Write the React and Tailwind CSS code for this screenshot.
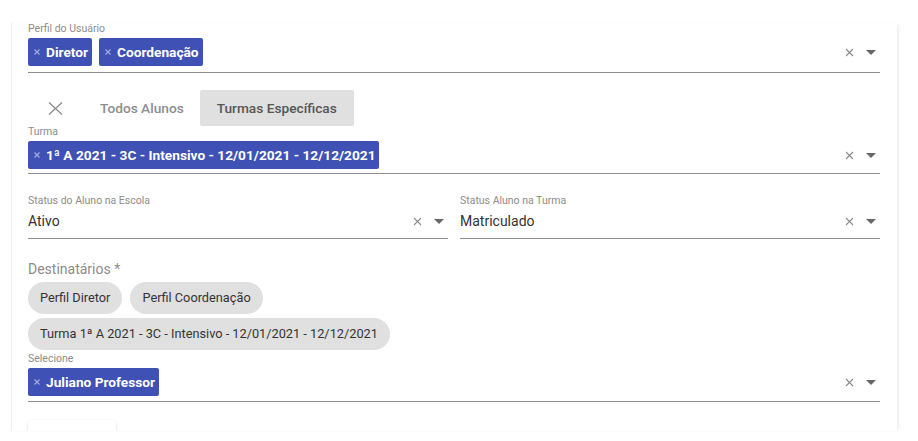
import React from 'react';

const font = { fontFamily: 'Roboto, "Noto Sans", sans-serif' };

function ClearIcon() {
  return (
    <svg width="9" height="9" viewBox="0 0 9 9" className="block">
      <path d="M1 1L8 8M8 1L1 8" stroke="#8a8a8a" strokeWidth="1.1" fill="none" />
    </svg>
  );
}

function ArrowIcon() {
  return (
    <svg width="10" height="5" viewBox="0 0 10 5" className="block">
      <path d="M0 0h10L5 5z" fill="#666" />
    </svg>
  );
}

function Adornment() {
  return (
    <div className="flex items-center gap-[12px] pr-[4px]">
      <ClearIcon />
      <ArrowIcon />
    </div>
  );
}

function Tag({ children }) {
  return (
    <span className="inline-flex h-[28px] items-center gap-[6px] rounded-[2px] bg-[#3f51b5] pl-[6px] pr-[4px] text-[13.7px] font-bold text-white">
      <svg width="6" height="6" viewBox="0 0 6 6" className="block">
        <path d="M0.5 0.5L5.5 5.5M5.5 0.5L0.5 5.5" stroke="#a4abdb" strokeWidth="1.2" />
      </svg>
      {children}
    </span>
  );
}

function Label({ children }) {
  return <div className="text-[10.5px] leading-[12px] text-[#8c8c8c]">{children}</div>;
}

function TagField({ label, tags, pb = 'pb-[6px]' }) {
  return (
    <div>
      <Label>{label}</Label>
      <div className={`mt-[3px] flex items-center border-b border-[#8f8f8f] ${pb}`}>
        <div className="flex flex-1 flex-wrap gap-[7px]">
          {tags.map((t) => (
            <Tag key={t}>{t}</Tag>
          ))}
        </div>
        <Adornment />
      </div>
    </div>
  );
}

function SelectField({ label, value }) {
  return (
    <div className="flex-1">
      <Label>{label}</Label>
      <div className="flex items-center border-b border-[#8f8f8f] pt-[4px] pb-[7px]">
        <div className="flex-1 text-[14px] leading-[20px] text-[#333]">{value}</div>
        <Adornment />
      </div>
    </div>
  );
}

function Pill({ children }) {
  return (
    <span className="inline-flex h-[32px] items-center rounded-full bg-[#e0e0e0] px-[12px] text-[12.75px] text-[#333]">
      {children}
    </span>
  );
}

export default function App() {
  return (
    <div className="relative h-[441px] w-[918px] overflow-hidden bg-white" style={font}>
      <div className="ml-[11px] mt-[23px] h-[408px] w-[886px] overflow-hidden border-l border-[#ededed] bg-white pl-[16px] pr-[17px] shadow-[3px_0_3px_-1px_rgba(0,0,0,0.07)]">
        <TagField label="Perfil do Usuário" tags={['Diretor', 'Coordenação']} />

        <div className="mt-[17px] flex h-[36px] items-stretch">
          <div className="flex w-[56px] items-center justify-center pr-[1px]">
            <svg width="15" height="13" viewBox="0 0 15 13" className="block">
              <path d="M1 0.5L14 12.5M14 0.5L1 12.5" stroke="#8a8a8a" strokeWidth="1.3" fill="none" />
            </svg>
          </div>
          <div className="flex items-center px-[16px] text-[13.7px] font-medium text-[#8d8d8d]">Todos Alunos</div>
          <div className="flex items-center rounded-[2px] bg-[#e0e0e0] px-[17px] text-[13.7px] font-medium text-[#555]">
            Turmas Específicas
          </div>
        </div>

        <TagField
          label="Turma"
          tags={['1ª A 2021 - 3C - Intensivo - 12/01/2021 - 12/12/2021']}
          pb="pb-[4px]"
        />

        <div className="mt-[21px] flex gap-[12px]">
          <SelectField label="Status do Aluno na Escola" value="Ativo" />
          <SelectField label="Status Aluno na Turma" value="Matriculado" />
        </div>

        <div className="mt-[21px] text-[14px] leading-[18px] text-[#8c8c8c]">Destinatários *</div>
        <div className="mt-[4px] flex flex-col items-start gap-[4px]">
          <div className="flex gap-[8px]">
            <Pill>Perfil Diretor</Pill>
            <Pill>Perfil Coordenação</Pill>
          </div>
          <Pill>Turma 1ª A 2021 - 3C - Intensivo - 12/01/2021 - 12/12/2021</Pill>
        </div>

        <div className="mt-[3px]">
          <TagField label="Selecione" tags={['Juliano Professor']} pb="pb-[5px]" />
        </div>

        <div className="mt-[18px] h-[36px] w-[88px] rounded-[4px] bg-white shadow-[0_1px_3px_rgba(0,0,0,0.15)]" />
      </div>
    </div>
  );
}
